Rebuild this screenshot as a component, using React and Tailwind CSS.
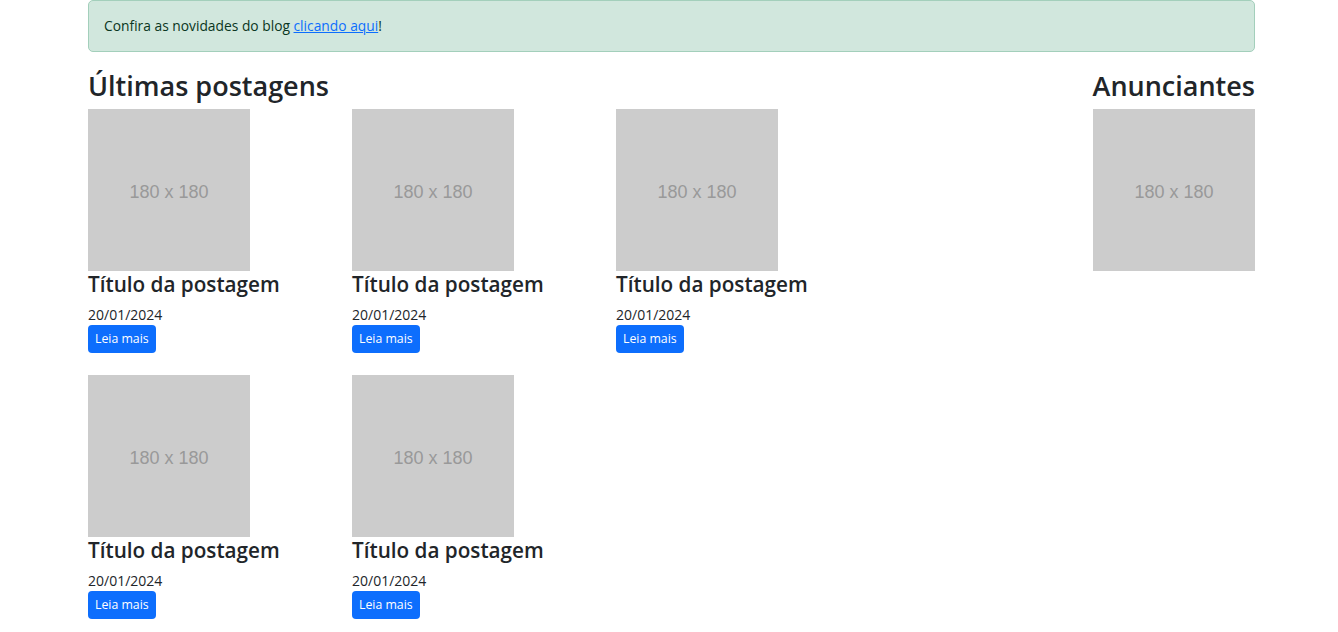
const posts = [1, 2, 3, 4, 5]

const Placeholder = () => (
    <div className="w-[162px] h-[162px] bg-[#cccccc] flex items-center justify-center">
        <span className="text-[18px] text-[#999999] mt-[4px] font-['Liberation_Sans',Arial,sans-serif]">180 x 180</span>
    </div>
)

const PostCard = () => (
    <div className="flex flex-col items-start">
        <Placeholder />
        <h4 className="text-[20.7px] leading-[26px] font-semibold text-[#212529]">Título da postagem</h4>
        <p className="text-[14px] leading-[20px] text-[#212529] mt-[8px]">20/01/2024</p>
        <button className="bg-[#0d6efd] text-white text-[12.3px] leading-[18px] px-[7px] py-[5px] rounded-[4px]">
            Leia mais
        </button>
    </div>
)

export default function App() {
    return (
        <div className="min-h-screen bg-white font-['Open_Sans','Noto_Sans',sans-serif] text-[#212529]">
            <div className="w-[1167px] ml-[88px]">
                <div className="h-[52px] bg-[#d1e7dd] border border-[#a3cfbb] rounded-[5px] px-[15px] flex items-center text-[13.8px] text-[#0a3622]">
                    <span>
                        Confira as novidades do blog{' '}
                        <a href="#" className="text-[#0d6efd] underline">clicando aqui</a>!
                    </span>
                </div>

                <div className="flex justify-between mt-[15px]">
                    <div className="flex-1">
                        <h2 className="text-[27px] leading-[38px] pb-[4px] font-semibold">Últimas postagens</h2>
                        <div className="grid grid-cols-[264px_264px_264px] gap-y-[22px]">
                            {posts.map((p) => (
                                <PostCard key={p} />
                            ))}
                        </div>
                    </div>
                    <div className="w-[162px] flex flex-col items-end">
                        <h2 className="text-[27px] leading-[38px] pb-[4px] font-semibold whitespace-nowrap">Anunciantes</h2>
                        <Placeholder />
                    </div>
                </div>
            </div>
        </div>
    )
}
